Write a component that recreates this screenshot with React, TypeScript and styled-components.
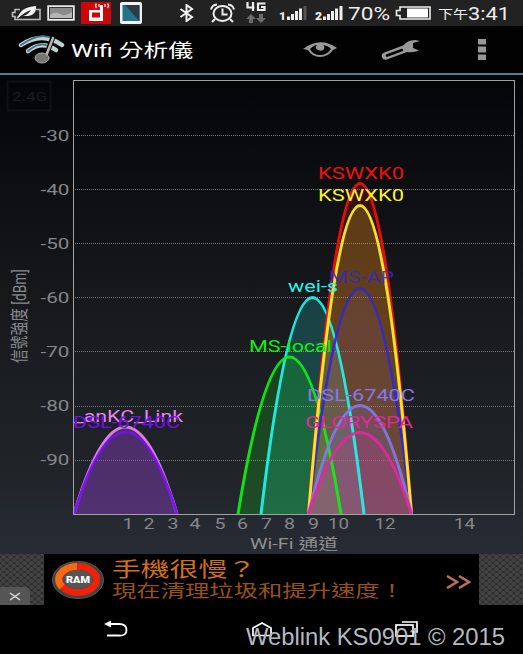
import type { ReactNode } from 'react';
import styled, { createGlobalStyle } from 'styled-components';

const GlobalStyle = createGlobalStyle`
  * {
    box-sizing: border-box;
  }

  body {
    margin: 0;
    background: #000;
    font-family: Roboto, 'Noto Sans CJK TC', sans-serif;
  }
`;

const Screen = styled.div`
  position: relative;
  display: flex;
  flex-direction: column;
  width: 523px;
  height: 654px;
  overflow: hidden;
  background: #000;
`;

const StatusBar = styled.div`
  display: flex;
  align-items: center;
  flex: none;
  height: 26px;
  background: #222;
`;

const Item = styled.div<{ $gap: number }>`
  flex: none;
  margin-left: ${props => props.$gap}px;

  svg {
    display: block;
  }
`;

const Header = styled.header`
  display: flex;
  align-items: center;
  flex: none;
  height: 49px;
  background: #020202;
  border-bottom: 2px solid #4a7f98;
`;

const ChartPanel = styled.main`
  flex: none;
  height: 479px;
  background: linear-gradient(#030406, #0d0e11 22%, #181a1e 52%, #202429 82%, #272b34);

  svg {
    display: block;
  }
`;

const Banner = styled.section`
  display: flex;
  flex: none;
  height: 51px;
  background: #000;
`;

const Mesh = styled.div`
  display: flex;
  align-items: flex-end;
  width: 44px;
  background-color: #2b2b2b;
  background-image: radial-gradient(ellipse, #434343 35%, transparent 55%),
    radial-gradient(ellipse, #434343 35%, transparent 55%);
  background-size: 7px 6px;
  background-position: 0 0, 3.5px 3px;
`;

const CloseButton = styled.button`
  display: flex;
  align-items: center;
  justify-content: center;
  width: 30px;
  height: 18px;
  padding: 0;
  border: 0;
  border-radius: 0 5px 0 0;
  background: #555;
`;

const BannerBody = styled.div`
  display: flex;
  align-items: center;
  width: 435px;
  padding-left: 7px;
`;

const BannerText = styled.div`
  display: flex;
  flex-direction: column;
  width: 290px;
  margin-left: 7px;
`;

const NavBar = styled.nav`
  display: flex;
  flex: none;
  height: 49px;
  padding-top: 15px;
  background: #000;
`;

const Watermark = styled.div`
  position: absolute;
  top: 622px;
  left: 246px;
  line-height: 28px;
`;

const Line = styled.svg`
  display: block;
  overflow: visible;
`;

interface WideTextProps {
  width: number;
  height: number;
  size: number;
  baseline: number;
  color?: string;
  weight?: number;
  family?: string;
  children: ReactNode;
}

// Fits a single line of text to the given width
function WideText({ width, height, size, baseline, color = '#fff', weight = 400, family, children }: WideTextProps) {
  return (
    <Line width={width} height={height}>
      <text
        y={baseline}
        fill={color}
        fontSize={size}
        fontWeight={weight}
        fontFamily={family}
        textLength={width}
        lengthAdjust="spacingAndGlyphs"
      >
        {children}
      </text>
    </Line>
  );
}

const BASE = 514;

const networks = [
  { name: 'wei-s', x: 312.5, top: 297.5, color: '#20f5ec', labelX: 288, labelY: 292, width: 50 },
  { name: 'MS-local', x: 289.5, top: 357, color: '#10f010', labelX: 249, labelY: 352, width: 83 },
  { name: 'MS-AP', x: 360, top: 288.5, color: '#3428c8', labelX: 329, labelY: 283, width: 65 },
  { name: 'KSWXK0', x: 360, top: 183.5, color: '#f0100c', labelX: 318, labelY: 178.5, width: 86 },
  { name: 'KSWXK0', x: 360, top: 205.5, color: '#fff22c', labelX: 318, labelY: 200.5, width: 86 },
  { name: 'DSL-6740C', x: 360, top: 405.5, color: '#827aec', labelX: 307, labelY: 400.5, width: 108 },
  { name: 'GLORYSPA', x: 360, top: 432.5, color: '#e0289c', labelX: 305, labelY: 427.5, width: 108 },
  { name: '_anKC_Link', x: 125.5, top: 427, color: '#e887ee', labelX: 74, labelY: 422, width: 109 },
  { name: 'DSL-6740C', x: 125.5, top: 432, color: '#7410e8', labelX: 73, labelY: 427.5, width: 107 },
];

const channels: [string, number][] = [
  ['1', 128], ['2', 149], ['3', 173], ['4', 195], ['5', 220], ['6', 242.5],
  ['7', 266.5], ['8', 289.5], ['9', 313.5], ['10', 338.5], ['12', 385], ['14', 464.5],
];

const levels = [-30, -40, -50, -60, -70, -80, -90];

function curve(x: number, top: number) {
  return `M${x - 51.5} ${BASE}Q${x} ${2 * top - BASE} ${x + 51.5} ${BASE}`;
}

function SignalChart() {
  return (
    <svg width="523" height="479" viewBox="0 75 523 479" fontFamily="Roboto, 'Noto Sans CJK TC', sans-serif">
      <rect x="7.5" y="81.5" width="43" height="29" fill="none" stroke="#0f1114" strokeWidth="2" />
      <text x="12" y="101" fontSize="13" fill="#1b1c20" textLength="35" lengthAdjust="spacingAndGlyphs">2.4G</text>

      {levels.map((level, i) => {
        const y = 135.5 + i * 54.1;
        return (
          <g key={level}>
            <line x1="75" x2="514" y1={Math.floor(y) + 0.5} y2={Math.floor(y) + 0.5} stroke="#77787a" strokeDasharray="1 1" />
            <text x="40.5" y={y + 5} fontSize="14.5" fill="#85878a" textLength="29" lengthAdjust="spacingAndGlyphs">
              {level}
            </text>
          </g>
        );
      })}

      <clipPath id="plot">
        <rect x="74" y="81" width="441" height="433" />
      </clipPath>
      <g clipPath="url(#plot)">
        {networks.map(net => (
          <path key={net.name + net.top} d={curve(net.x, net.top)} fill={net.color} fillOpacity="0.19" />
        ))}
        {networks.map(net => (
          <path
            key={net.name + net.top}
            d={curve(net.x, net.top)}
            fill="none"
            stroke={net.color}
            strokeOpacity="0.92"
            strokeWidth="3"
          />
        ))}
      </g>
      {networks.map(net => (
        <text
          key={net.name + net.top}
          x={net.labelX}
          y={net.labelY}
          fontSize="16"
          fill={net.color}
          fillOpacity={net.name === 'MS-AP' ? 0.85 : 1}
          textLength={net.width}
          lengthAdjust="spacingAndGlyphs"
        >
          {net.name}
        </text>
      ))}

      <rect x="73.5" y="80.5" width="441" height="434" fill="none" stroke="#a0a1a3" />

      {channels.map(([label, x]) => (
        <text
          key={label}
          x={x - (label.length > 1 ? 10.5 : 5.5)}
          y="528.5"
          fontSize="14.5"
          fill="#85878a"
          textLength={label.length > 1 ? 21 : 11}
          lengthAdjust="spacingAndGlyphs"
        >
          {label}
        </text>
      ))}
      <text x="250" y="549" fontSize="14.5" fill="#8f9194" textLength="88" lengthAdjust="spacingAndGlyphs">Wi-Fi 通道</text>
      <text transform="translate(26 363) rotate(-90)" fontSize="18.5" fill="#85878a" textLength="94" lengthAdjust="spacingAndGlyphs">
        信號強度 [dBm]
      </text>
    </svg>
  );
}

function SignalBars({ sim, dimLast }: { sim: string; dimLast?: boolean }) {
  return (
    <svg width="30" height="18" viewBox="0 0 30 18" fill="#eee">
      <text x="0" y="16" fontSize="10.5" fontWeight="900" textLength="7" lengthAdjust="spacingAndGlyphs">{sim}</text>
      <rect x="8" y="12.5" width="3" height="3.5" />
      <rect x="12" y="10" width="3" height="6" />
      <rect x="16" y="7" width="3" height="9" />
      <rect x="20" y="4.5" width="3" height="11.5" />
      <rect x="24.5" y="2" width="3" height="14" fill={dimLast ? '#555' : '#eee'} />
    </svg>
  );
}

function StatusIcons() {
  return (
    <StatusBar>
      <Item $gap={11}>
        <svg width="31" height="18" viewBox="0 0 31 18">
          <path d="M9 5.5H4v3H1.500v4H4v3h25v-10h-4M6 14l3-3" fill="none" stroke="#bbb" strokeWidth="1.6" />
          <path d="M7 14Q9 3 25 2Q26 13 12 12Q17 11 20 6Q14 8 7 14Z" fill="#f5f5f5" />
        </svg>
      </Item>
      <Item $gap={5}>
        <svg width="28" height="16" viewBox="0 0 28 16">
          <rect x="1.200" y="1.200" width="25.600" height="13.600" fill="none" stroke="#eee" strokeWidth="1.8" />
          <rect x="3" y="3" width="22" height="10" fill="#8a8a8a" />
          <path d="M3 10Q8 6 13 9T25 7V13H3Z" fill="#b5b5b5" />
        </svg>
      </Item>
      <Item $gap={6}>
        <svg width="30" height="22" viewBox="0 0 30 22">
          <rect width="30" height="22" rx="1" fill="#cb0709" />
          <path d="M8 8h11V3h3v16H8Z" fill="#fff" />
          <rect x="11" y="10.5" width="8" height="5" fill="#cb0709" />
          <path d="M15.500 1.500q-2 2 0 4.500M18 2v3M24 2v3M26.500 1.500q2 2 0 4.500" fill="none" stroke="#ffc5c0" strokeWidth="1.500" />
        </svg>
      </Item>
      <Item $gap={9}>
        <svg width="22" height="22" viewBox="0 0 22 22">
          <rect width="22" height="22" rx="2" fill="#f2f2f2" />
          <rect x="2.500" y="3" width="17" height="16" fill="#24718a" />
          <path d="M5 3H19.500V19Z" fill="#2a3b43" />
        </svg>
      </Item>
      <Item $gap={37}>
        <svg width="15" height="18" viewBox="0 0 15 18">
          <path d="M1.500 5l11.500 8-5.500 4V1l5.500 4-11.500 8" fill="none" stroke="#f2f2f2" strokeWidth="2" />
        </svg>
      </Item>
      <Item $gap={15}>
        <svg width="27" height="20" viewBox="0 0 27 20" fill="none" stroke="#eee" strokeWidth="2">
          <ellipse cx="13.500" cy="10.500" rx="9" ry="7.500" />
          <path d="M13.500 5.500v6h5M2 6.500Q3 2 8 1.500M25 6.500Q24 2 19 1.500M6 16l-3 3M21 16l3 3" />
        </svg>
      </Item>
      <Item $gap={10}>
        <svg width="21" height="22" viewBox="0 0 21 22">
          <path d="M1.500 0v5.500h7M7 0v9M19.500 1.500H12V8h6.500V5H15" fill="none" stroke="#eee" strokeWidth="2.200" />
          <path d="M5 12l5 5H7v4H3v-4H0zM15 21l5-5h-3v-4h-4v4h-3z" fill="#6b6b6b" />
        </svg>
      </Item>
      <Item $gap={12}><SignalBars sim="1" dimLast /></Item>
      <Item $gap={6}><SignalBars sim="2" /></Item>
      <Item $gap={3}>
        <WideText width={42} height={24} size={18} baseline={18.5} color="#eee">70%</WideText>
      </Item>
      <Item $gap={5}>
        <svg width="36" height="14" viewBox="0 0 36 14">
          <path d="M5 1h30v12H5V9.500H1.500v-5H5Z" fill="none" stroke="#eee" strokeWidth="1.600" />
          <rect x="12" y="2.500" width="21" height="9" fill="#fff" />
        </svg>
      </Item>
      <Item $gap={7}>
        <WideText width={30} height={24} size={12} baseline={18} color="#eee">下午</WideText>
      </Item>
      <Item $gap={0}>
        <WideText width={42} height={24} size={18.5} baseline={18.5} color="#eee">3:41</WideText>
      </Item>
    </StatusBar>
  );
}

function AppHeader() {
  return (
    <Header>
      <Item $gap={18}>
        <svg width="48" height="30" viewBox="0 0 48 30" fill="none" strokeLinecap="round">
          <path d="M3 10Q24-4 44 10" stroke="#c3d0d2" strokeWidth="4.500" />
          <path d="M3 10Q23-4 35 4" stroke="#397387" strokeWidth="1.800" />
          <path d="M10 16Q24 5 38 15" stroke="#c3d0d2" strokeWidth="4.500" />
          <path d="M10 16Q22 6 30 11" stroke="#397387" strokeWidth="1.800" />
          <path d="M28 21L35 2" stroke="#020202" strokeWidth="5" />
          <path d="M28 21L35 3" stroke="#b5b5b0" strokeWidth="2.600" />
          <ellipse cx="24" cy="23" rx="7" ry="5" fill="#777773" stroke="#aaaaa5" />
        </svg>
      </Item>
      <Item $gap={5}>
        <WideText width={122} height={30} size={18.5} baseline={21.500} color="#fff">Wifi 分析儀</WideText>
      </Item>
      <Item $gap={109}>
        <svg width="36" height="18" viewBox="0 0 36 18">
          <path d="M1 8Q18-5 35 7L31 9Q26 16 18 16Q10 16 6 9Z" fill="#999" />
          <path d="M8 8Q12 4 15 4Q12 7 16 9Q20 11 22 8Q23 5 21 4Q27 5 29 8Q25 14 18 14Q11 14 8 8Z" fill="#020202" />
          <path d="M17 5q3-1 3 1t-3 0" fill="#999" />
        </svg>
      </Item>
      <Item $gap={43}>
        <svg width="42" height="22" viewBox="0 0 42 22">
          <path d="M4.500 17L26 9" stroke="#999" strokeWidth="7.500" strokeLinecap="round" />
          <path d="M6 16.500L21 11" stroke="#020202" strokeWidth="2.600" strokeLinecap="round" />
          <path d="M22 7Q26 1 34 1L39 2L32 4V9L38 11.500Q33 14 25 13Z" fill="#999" />
        </svg>
      </Item>
      <Item $gap={54}>
        <svg width="10" height="22" viewBox="0 0 10 22" fill="#969696">
          <rect x="1" width="8" height="5.500" />
          <rect x="1" y="7.500" width="8" height="6" />
          <rect x="1" y="15.500" width="8" height="5.500" />
        </svg>
      </Item>
    </Header>
  );
}

function AdBanner() {
  return (
    <Banner>
      <Mesh>
        <CloseButton aria-label="close">
          <svg width="12" height="9" viewBox="0 0 12 9">
            <path d="M1 1l10 7M11 1L1 8" stroke="#ddd" strokeWidth="1.500" />
          </svg>
        </CloseButton>
      </Mesh>
      <BannerBody>
        <svg width="54" height="40" viewBox="0 0 54 40">
          <ellipse cx="27" cy="20" rx="25.500" ry="18.500" fill="#404540" stroke="#555853" />
          <ellipse cx="27" cy="19.500" rx="18.500" ry="13" fill="none" stroke="#ee2109" strokeWidth="7" />
          <path d="M26 6.500A18.500 13 0 0 0 11 27" fill="none" stroke="#f56a14" strokeWidth="7" />
          <ellipse cx="27" cy="19.500" rx="14.500" ry="9.500" fill="#555" />
          <text x="15" y="22.500" fontSize="8.500" fontWeight="900" fill="#fff" textLength="24" lengthAdjust="spacingAndGlyphs">RAM</text>
        </svg>
        <BannerText>
          <WideText width={144} height={24} size={20} baseline={20} color="#d07018">手機很慢？</WideText>
          <WideText width={292} height={22} size={17} baseline={16} color="#985214">現在清理垃圾和提升速度！</WideText>
        </BannerText>
        <Item $gap={43}>
          <svg width="28" height="18" viewBox="0 0 28 18">
            <path d="M2 1l10 6-10 6M14 1l10 6-10 6" transform="translate(0 4)" fill="none" stroke="#bd6d5b" strokeWidth="2.600" />
          </svg>
        </Item>
      </BannerBody>
      <Mesh />
    </Banner>
  );
}

function BottomNav() {
  return (
    <NavBar>
      <Item $gap={104}>
        <svg width="26" height="20" viewBox="0 0 26 20">
          <path d="M3 4H15Q22.500 4 22.500 10T15 15.500H3" fill="none" stroke="#fff" strokeWidth="1.800" />
          <path d="M0 4L7 0.500V7.500Z" fill="#fff" />
        </svg>
      </Item>
      <Item $gap={121}>
        <svg width="22" height="20" viewBox="0 0 22 20">
          <path d="M2 15.500V8L11 3L20 8V15.500Z" fill="none" stroke="#fff" strokeWidth="1.700" />
        </svg>
      </Item>
      <Item $gap={122}>
        <svg width="25" height="20" viewBox="0 0 25 20" fill="none" stroke="#fff" strokeWidth="1.700">
          <rect x="1" y="5" width="17" height="11" />
          <path d="M7 2H22V12H18" />
        </svg>
      </Item>
    </NavBar>
  );
}

export default function App() {
  return (
    <Screen>
      <GlobalStyle />
      <StatusIcons />
      <AppHeader />
      <ChartPanel>
        <SignalChart />
      </ChartPanel>
      <AdBanner />
      <BottomNav />
      <Watermark>
        <WideText width={259} height={28} size={23.5} baseline={23} color="#b4bac0" family="'Liberation Sans', sans-serif">
          Weblink KS0901 © 2015
        </WideText>
      </Watermark>
    </Screen>
  );
}
